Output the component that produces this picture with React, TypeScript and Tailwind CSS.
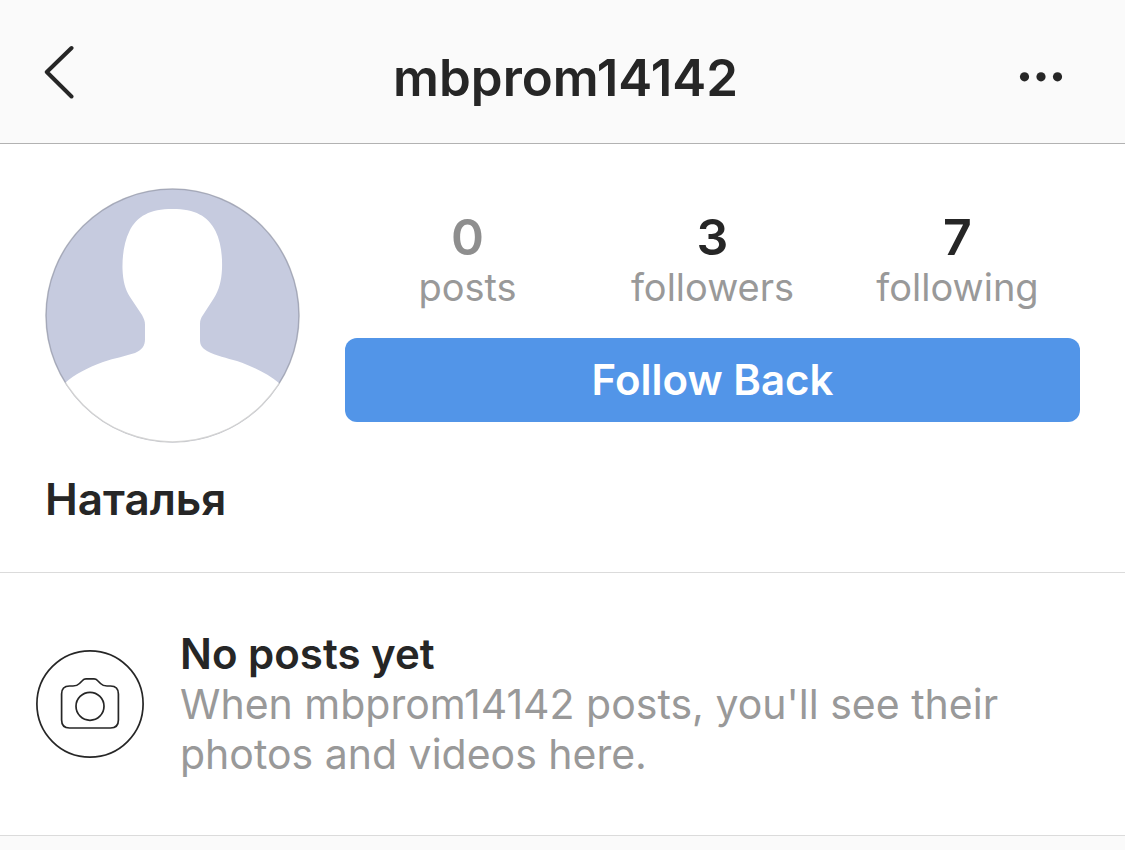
const stats = [
  { value: 0, label: "posts" },
  { value: 3, label: "followers" },
  { value: 7, label: "following" },
];

function BackIcon() {
  return (
    <svg width="32" height="56" viewBox="0 0 32 56" fill="none" stroke="#262626" strokeWidth="4" strokeLinecap="round" strokeLinejoin="round" aria-hidden="true">
      <path d="M27.500 4 2.800 28 27.500 52.500" />
    </svg>
  );
}

function MoreIcon() {
  return (
    <svg width="44" height="12" viewBox="0 0 44 12" fill="#262626" aria-hidden="true">
      <circle cx="5.500" cy="4.800" r="4.600" />
      <circle cx="22" cy="4.800" r="4.600" />
      <circle cx="38.500" cy="4.800" r="4.600" />
    </svg>
  );
}

function Avatar() {
  return (
    <svg className="shrink-0" width="255" height="255" viewBox="0 0 255 255" role="img" aria-label="Profile photo">
      <defs>
        <clipPath id="avatar-clip">
          <circle cx="127.500" cy="127.500" r="127" />
        </clipPath>
      </defs>
      <g clipPath="url(#avatar-clip)">
        <rect width="255" height="255" fill="#c6cbdf" />
        <path
          fill="#fff"
          d="M127.500 21C150 21 163 28 170.500 43C176 54 177.500 68 177 81C176.500 93 174 102 169 110L158 127C156 130 155 132 155 136V152C155 157 157 160 162 163C171 168 182 170 192 173C209 179 223 186 234 195L254 214V255H0V214L20 195C30 186 42 180 58 174C70 170 81 168 90 165C97 162 100 158 100 151V137C100 133 99 131 97 127L85 109C80 101 78 93 77.500 81C77.200 68 79 54 84.500 43C92 28 105 21 127.500 21Z"
        />
      </g>
      <circle cx="127.500" cy="127.500" r="126.500" fill="none" stroke="#000" strokeOpacity="0.17" strokeWidth="1.600" />
    </svg>
  );
}

function CameraIcon() {
  return (
    <svg className="shrink-0" width="108" height="108" viewBox="0 0 108 108" fill="none" stroke="#262626" strokeWidth="1.700" strokeLinejoin="round" aria-hidden="true">
      <circle cx="54" cy="54" r="53.100" />
      <path d="M33.500 36H37C40 36 41.500 35.500 43.500 33.500L46.500 30.500C47.500 29.300 48.500 28.800 50 28.800H58C59.500 28.800 60.500 29.300 61.500 30.500L64.500 33.500C66.500 35.500 68 36 71 36H74.500Q82.400 36 82.400 44V70Q82.400 78 74.500 78H33.500Q25.600 78 25.600 70V44Q25.600 36 33.500 36Z" />
      <circle cx="54" cy="56.300" r="14" />
    </svg>
  );
}

export default function App() {
  return (
    <div className="min-h-screen bg-[#fafafa] font-['Inter','Liberation_Sans',sans-serif] text-[#262626]">
      <header className="grid grid-cols-[1fr_auto_1fr] items-center border-b border-[#b2b2b2] pt-[46px] pr-[38px] pb-[33px] pl-11">
        <button type="button" aria-label="Back" className="-my-2 self-start justify-self-start pt-1.5">
          <BackIcon />
        </button>
        <h1 className="text-[51px] leading-16 font-semibold">mbprom14142</h1>
        <button type="button" aria-label="More options" className="justify-self-end px-6 py-4">
          <MoreIcon />
        </button>
      </header>

      <main>
        <section className="border-b border-[#dbdbdb] bg-white px-[45px] pt-11 pb-[45px]">
          <div className="flex gap-[45px]">
            <Avatar />
            <div className="flex-1 pt-6">
              <dl className="grid grid-cols-3 text-center">
                {stats.map((stat) => (
                  <div key={stat.label} className="flex flex-col-reverse">
                    <dt className="text-[38px] leading-[50px] text-[#999999]">{stat.label}</dt>
                    <dd className={stat.value === 0 ? "text-[50px] leading-[50px] font-semibold text-[#8e8e8e]" : "text-[50px] leading-[50px] font-semibold"}>
                      {stat.value}
                    </dd>
                  </div>
                ))}
              </dl>
              <button type="button" className="mt-[26px] h-[84px] w-full rounded-xl bg-[#5295e8] text-[42px] leading-[50px] font-semibold text-white">
                Follow Back
              </button>
            </div>
          </div>
          <h2 className="mt-7 text-[44px] leading-14 font-semibold">Наталья</h2>
        </section>

        <section className="flex items-center gap-9 border-b border-[#dbdbdb] bg-white px-9 py-14">
          <CameraIcon />
          <div className="max-w-[860px]">
            <h2 className="text-[42px] leading-[50px] font-semibold">No posts yet</h2>
            <p className="text-[41px] leading-[50px] text-[#999999]">When mbprom14142 posts, you'll see their photos and videos here.</p>
          </div>
        </section>
      </main>
    </div>
  );
}
